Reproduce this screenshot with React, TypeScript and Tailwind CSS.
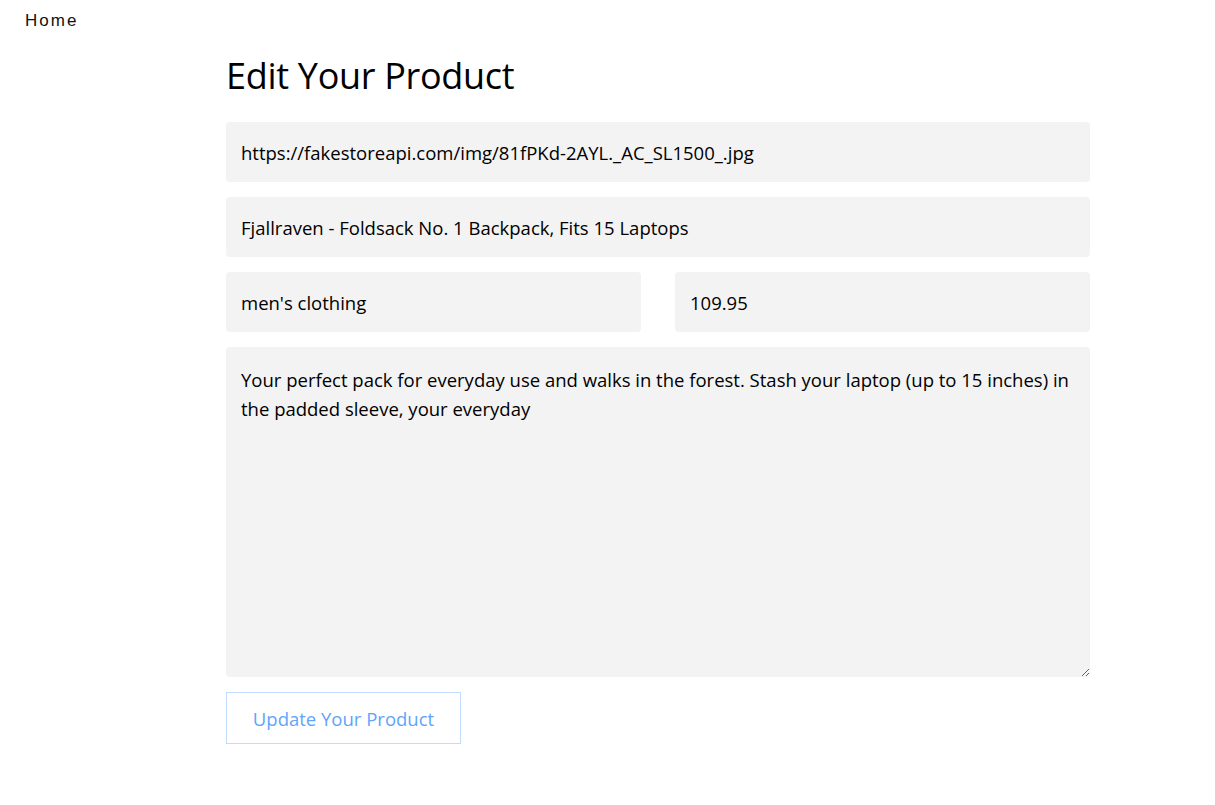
import React from "react";

export default function App() {
  const font = { fontFamily: '"Open Sans", "Noto Sans", sans-serif' };
  return (
    <div className="min-h-[805px] bg-white text-black" style={font}>
      <nav className="pl-[25px] pt-[8px] h-[30px]">
        <a className="text-[17px] font-normal leading-[22px] tracking-[2px] text-[#111]" style={{ fontFamily: '"Liberation Sans", Arial, sans-serif' }}>
          Home
        </a>
      </nav>
      <div className="ml-[226px] w-[864px]">
        <h1 className="text-[36px] leading-[48px] mt-[22px] mb-[22px] tracking-[-0.3px]">Edit Your Product</h1>
        <form className="flex flex-col gap-[15px]">
          <input
            className="h-[60px] w-full rounded-[4px] bg-[#f3f3f3] px-[15px] pt-[1px] text-[18.5px] outline-none"
            defaultValue="https://fakestoreapi.com/img/81fPKd-2AYL._AC_SL1500_.jpg"
          />
          <input
            className="h-[60px] w-full rounded-[4px] bg-[#f3f3f3] px-[15px] pt-[1px] text-[18.5px] outline-none"
            defaultValue="Fjallraven - Foldsack No. 1 Backpack, Fits 15 Laptops"
          />
          <div className="flex gap-[34px]">
            <input
              className="h-[60px] flex-1 min-w-0 rounded-[4px] bg-[#f3f3f3] px-[15px] pt-[1px] text-[18.5px] outline-none"
              defaultValue="men's clothing"
            />
            <input
              className="h-[60px] flex-1 min-w-0 rounded-[4px] bg-[#f3f3f3] px-[15px] pt-[1px] text-[18.5px] outline-none"
              defaultValue="109.95"
            />
          </div>
          <textarea
            className="h-[330px] w-full rounded-[4px] bg-[#f3f3f3] px-[15px] pt-[18px] pb-[15px] text-[18.5px] leading-[29px] outline-none"
            defaultValue="Your perfect pack for everyday use and walks in the forest. Stash your laptop (up to 15 inches) in the padded sleeve, your everyday"
          />
          <div>
            <button
              type="button"
              className="h-[52px] w-[235px] border border-[#bfdbfe] bg-white pt-[2px] text-[18.5px] text-[#60a5fa]"
            >
              Update Your Product
            </button>
          </div>
        </form>
      </div>
    </div>
  );
}
